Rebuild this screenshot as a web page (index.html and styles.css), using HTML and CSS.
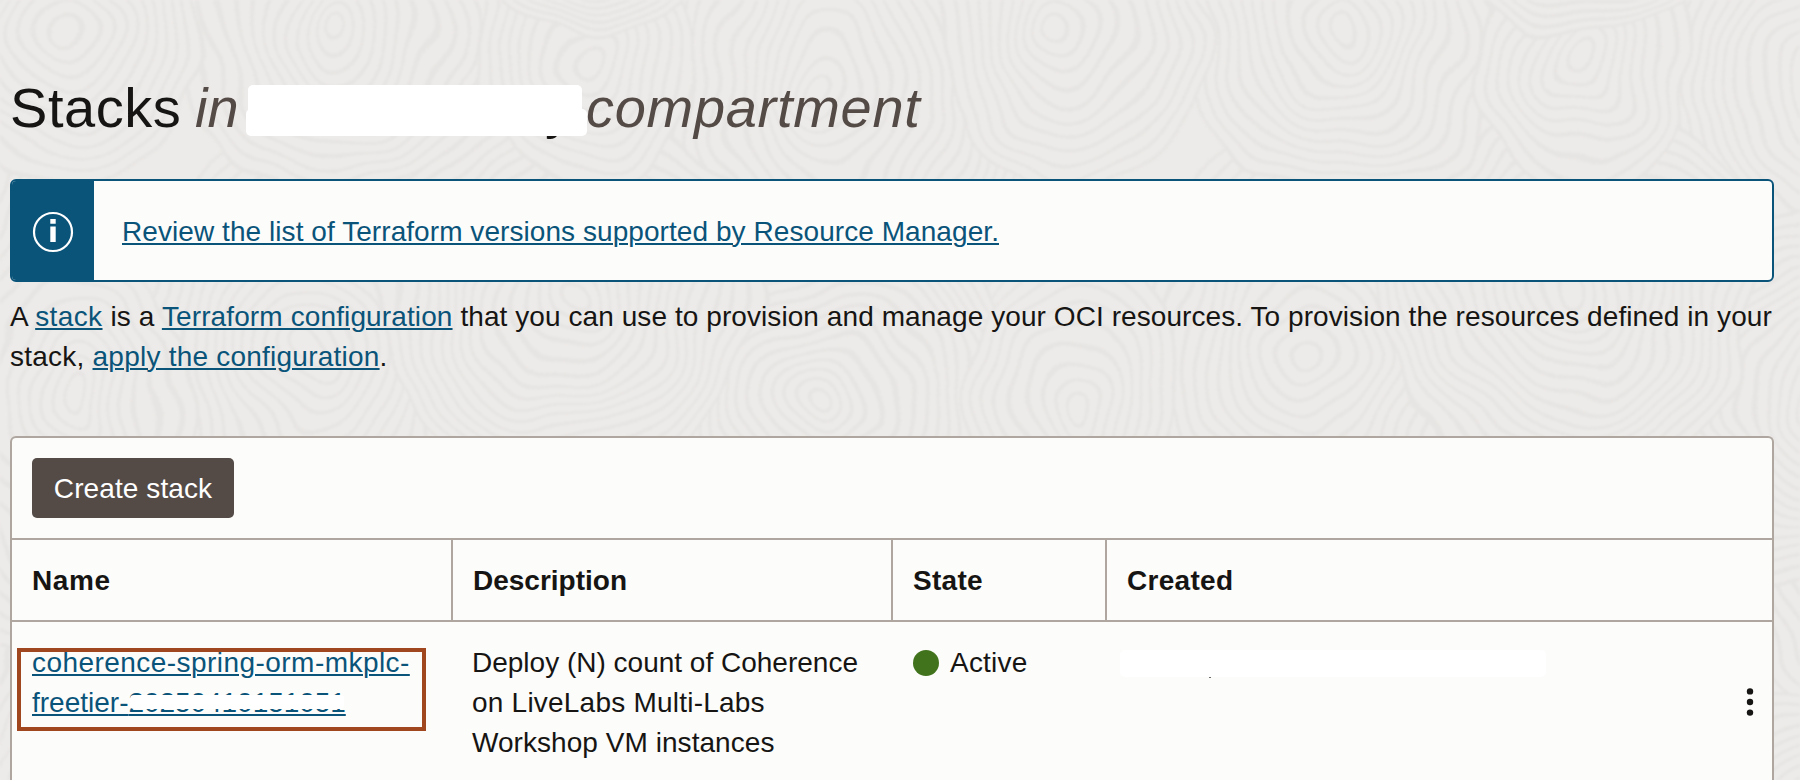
FILE: index.html
```
<!DOCTYPE html>
<html lang="en">
<head>
<meta charset="utf-8">
<title>Stacks</title>
<link rel="stylesheet" href="styles.css">
</head>
<body>
<svg class="backdrop" viewBox="0 0 1800 780" aria-hidden="true">
  <filter id="grain" x="0" y="0" width="1800" height="780" filterUnits="userSpaceOnUse">
    <feTurbulence type="fractalNoise" baseFrequency="0.009" numOctaves="2" seed="4"/>
    <feDisplacementMap in="SourceGraphic" scale="60" xChannelSelector="R" yChannelSelector="G"/>
    <feGaussianBlur stdDeviation="0.8"/>
  </filter>
  <g id="rings" filter="url(#grain)"></g>
</svg>
<main class="page">
  <h1 class="title"><span class="title-name">Stacks</span><em class="title-in">in</em><span class="mask-title"><span class="mask-tail">y</span><i class="mask-upper"></i><i class="mask-lower"></i></span><em class="title-comp">compartment</em></h1>

  <section class="banner">
    <div class="banner-icon">
      <svg width="42" height="42" viewBox="0 0 42 42"><circle cx="21" cy="21" r="19" fill="none" stroke="#fff" stroke-width="2.2"/><path d="M18.3 8h5.4v4.7h-5.4zM18.3 15.5h5.4v15.500h-5.4z" fill="#fff"/></svg>
    </div>
    <div class="banner-body"><a class="link t-review">Review the list of Terraform versions supported by Resource Manager.</a></div>
  </section>

  <p class="intro"><span class="line t-intro"><span class="t-lead">A <a class="link t-stack">stack</a> is a <a class="link">Terraform configuration</a></span> that you can use to provision and manage your OCI resources. To provision the resources defined in your</span><span class="line t-intro2">stack, <a class="link">apply the configuration</a>.</span></p>

  <section class="table">
    <div class="toolbar"><button class="create">Create stack</button></div>
    <div class="row head">
      <div class="cell"><span class="t-name">Name</span></div>
      <div class="cell">Description</div>
      <div class="cell"><span class="t-state">State</span></div>
      <div class="cell"><span class="t-state">Created</span></div>
    </div>
    <div class="row body">
      <div class="cell name-cell"><a class="link"><span class="line t-n1">coherence-spring-orm-mkplc-</span><span class="line t-n2">freetier-<span class="digits">20250410151051<i class="mask-digits"></i></span></span></a><i class="highlight"></i></div>
      <div class="cell desc-cell"><span class="line">Deploy (N) count of Coherence</span><span class="line t-d2">on LiveLabs Multi-Labs</span><span class="line t-d3">Workshop VM instances</span></div>
      <div class="cell state-cell"><i class="dot"></i><span class="t-active">Active</span></div>
      <div class="cell created-cell"><i class="comma-tip"></i><i class="mask-created"></i>
        <svg class="kebab" width="8" height="30" viewBox="0 0 8 30"><circle cx="4" cy="4.4" r="3.2"/><circle cx="4" cy="15" r="3.2"/><circle cx="4" cy="25.6" r="3.2"/></svg>
      </div>
    </div>
  </section>
</main>
<script src="rings.js"></script>
</body>
</html>
```
FILE: styles.css
```
* { box-sizing: border-box; }
body { margin: 0; background: #edebe9; overflow: hidden; width: 1800px; height: 780px; color: #161513; font: 28px/40px "Liberation Sans", Arial, sans-serif; }
.backdrop { position: absolute; left: 0; top: 0; width: 1800px; height: 780px; }
.backdrop g { color-interpolation-filters: sRGB; }
.backdrop filter { color-interpolation-filters: sRGB; }
.backdrop ellipse { fill: none; stroke: #e7e5e3; stroke-width: 3.5; }
.backdrop .field { fill: #edebe9; }
.page { position: relative; width: 1774px; height: 780px; padding-left: 10px; overflow: hidden; }
.line { display: block; white-space: nowrap; width: max-content; }
.link { color: #0a547a; text-decoration: underline; text-decoration-thickness: 2px; text-underline-offset: 2px; }
.title { margin: 0; padding-top: 76px; height: 179px; display: flex; font: 400 56px/64px "Liberation Sans", Arial, sans-serif; white-space: nowrap; }
.title em { color: #544b47; }
.title-name { width: 185px; letter-spacing: .55px; }
.title-in { width: 51px; }
.title-comp { letter-spacing: .7px; margin-left: -1px; }
.mask-title { position: relative; width: 341px; height: 64px; }
.mask-tail { position: absolute; right: 14px; top: 0; }
.mask-upper, .mask-lower { position: absolute; background: #fff; border-radius: 5px; }
.mask-upper { left: 2px; top: 9px; width: 334px; height: 30px; }
.mask-lower { left: 0; top: 33px; width: 341px; height: 27px; }
.banner { display: flex; height: 103px; border: 2px solid #0a547a; border-radius: 6px; background: #fcfcfa; overflow: hidden; }
.banner-icon { width: 82px; background: #0a547a; display: flex; align-items: center; justify-content: center; padding-top: 3px; }
.banner-body { padding: 31px 0 0 28px; white-space: nowrap; }
.t-review { letter-spacing: .065px; }
.intro { margin: 0; padding-top: 15px; height: 154px; }
.t-intro { letter-spacing: .075px; }
.t-lead { letter-spacing: .12px; }
.t-stack { letter-spacing: .4px; }
.t-intro2 { letter-spacing: .23px; }
.table { border: 2px solid #aea69f; border-bottom: 0; border-radius: 6px 6px 0 0; background: #fcfcfa; height: 360px; }
.toolbar { height: 102px; padding: 20px; border-bottom: 2px solid #aea69f; }
.create { display: block; width: 202px; height: 60px; padding: 2px 0 0; border: 0; border-radius: 5px; background: #544b47; color: #fff; font: inherit; letter-spacing: .1px; }
.row { display: grid; grid-template-columns: 441px 440px 214px 1fr; }
.head { height: 82px; border-bottom: 2px solid #aea69f; font-weight: 700; }
.head .cell { padding: 21px 20px 0; border-right: 2px solid #aea69f; }
.head .cell:last-child { border: 0; }
.t-name { letter-spacing: .6px; }
.t-state { letter-spacing: .3px; }
.body .cell { position: relative; padding: 21px 20px 0; height: 160px; }
.body .desc-cell { padding-left: 19px; }
.t-n1 { letter-spacing: .45px; }
.t-d2 { letter-spacing: .22px; }
.t-d3 { letter-spacing: .05px; }
.t-active { letter-spacing: .2px; }
.highlight { position: absolute; left: 5px; top: 26px; width: 409px; height: 83px; border: 4px solid #a1471f; }
.digits { position: relative; letter-spacing: -.05px; }
.mask-digits { position: absolute; left: 2px; top: 8px; width: 214px; height: 14px; background: #fff; border-radius: 4px; }
.body .state-cell { display: flex; gap: 11px; }
.dot { width: 26px; height: 26px; margin-top: 7px; border-radius: 50%; background: #41731c; }
.mask-created { position: absolute; left: 13px; top: 28px; width: 426px; height: 27px; background: #fff; border-radius: 5px; }
.comma-tip { position: absolute; left: 102px; top: 54px; width: 2px; height: 2px; background: #6c6b69; }
.kebab { position: absolute; right: 18px; top: 65px; fill: #161513; }
```
FILE: rings.js
```
// Overlapping families of growth rings: [centre x, centre y, radius x, radius y]
const families = [
  [830, 90, 210, 300],
  [830, 400, 200, 190],
  [310, 350, 170, 230],
  [568, 290, 190, 200],
  [338, 30, 160, 170],
  [69, 30, 130, 160],
  [583, 60, 110, 130],
  [590, -60, 130, 95],
  [75, 400, 110, 150]
];
const group = document.getElementById('rings');

function ring(cx, cy, rx, ry, field) {
  const e = document.createElementNS('http://www.w3.org/2000/svg', 'ellipse');
  e.setAttribute('cx', cx);
  e.setAttribute('cy', cy);
  e.setAttribute('rx', rx);
  e.setAttribute('ry', ry);
  if (field) e.setAttribute('class', 'field');
  group.appendChild(e);
}

for (const dy of [480, 0]) {
  for (const dx of [-1000, 0, 1000]) {
    for (const [x, y, rx, ry] of families) {
      const count = Math.round(rx / 12);
      for (let i = count; i > 0; i--) {
        ring(x + dx, y + dy, rx * i / count, ry * i / count, i === count);
      }
    }
  }
}
```
